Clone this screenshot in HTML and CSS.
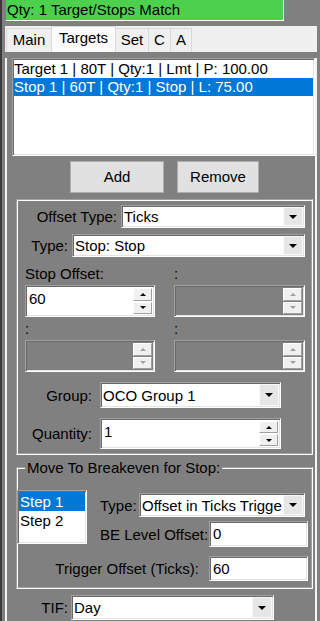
FILE: index.html
```html
<!DOCTYPE HTML>
<html>
<head>
    <title>Targets</title>
    <meta name="viewport" content="width=device-width, initial-scale=1">
    <link rel="stylesheet" href="styles.css">
</head>

<!--body scope-------------------------------------------------------->

<body>
<div class="frame">

    <div class="status">Qty: 1 Target/Stops Match</div>

    <div class="tabctl">
        <div class="tabstrip">
            <div class="tab t-main">Main</div>
            <div class="tab t-targets sel">Targets</div>
            <div class="tab t-set">Set</div>
            <div class="tab t-c">C</div>
            <div class="tab t-a">A</div>
        </div>

        <div class="page">

            <div class="list sunk orders">
                <div class="item">Target 1 | 80T | Qty:1 | Lmt | P: 100.00</div>
                <div class="item on">Stop 1 | 60T | Qty:1 | Stop | L: 75.00</div>
            </div>

            <div class="btnrow">
                <div class="btn add">Add</div>
                <div class="btn remove">Remove</div>
            </div>

            <!--order settings-->
            <div class="etched box1">
                <div class="row r-offset">
                    <div class="lbl">Offset Type:</div>
                    <div class="combo sunk"><span class="val">Ticks</span><span class="drop"></span></div>
                </div>
                <div class="row r-type">
                    <div class="lbl">Type:</div>
                    <div class="combo sunk"><span class="val">Stop: Stop</span><span class="drop"></span></div>
                </div>

                <div class="offsets">
                    <div class="cap">Stop Offset:</div>
                    <div class="cap">:</div>
                    <div class="spin sunk"><span class="val">60</span><span class="arrows"><span class="up"></span><span class="dn"></span></span></div>
                    <div class="spin sunk off"><span class="val"></span><span class="arrows"><span class="up"></span><span class="dn"></span></span></div>
                    <div class="cap">:</div>
                    <div class="cap">:</div>
                    <div class="spin sunk off"><span class="val"></span><span class="arrows"><span class="up"></span><span class="dn"></span></span></div>
                    <div class="spin sunk off"><span class="val"></span><span class="arrows"><span class="up"></span><span class="dn"></span></span></div>
                </div>

                <div class="row r-group">
                    <div class="lbl">Group:</div>
                    <div class="combo sunk"><span class="val">OCO Group 1</span><span class="drop"></span></div>
                </div>
                <div class="row r-qty">
                    <div class="lbl">Quantity:</div>
                    <div class="spin sunk"><span class="val">1</span><span class="arrows"><span class="up"></span><span class="dn"></span></span></div>
                </div>
            </div>

            <!--breakeven-->
            <div class="etched box2">
                <span class="title">Move To Breakeven for Stop:</span>
                <div class="be-top">
                    <div class="list sunk steps">
                        <div class="item on">Step 1</div>
                        <div class="item">Step 2</div>
                    </div>
                    <div class="be-right">
                        <div class="row r-betype">
                            <div class="lbl">Type:</div>
                            <div class="combo sunk"><span class="val">Offset in Ticks Trigge</span><span class="drop"></span></div>
                        </div>
                        <div class="row r-level">
                            <div class="lbl">BE Level Offset:</div>
                            <div class="field sunk">0</div>
                        </div>
                    </div>
                </div>
                <div class="row r-trigger">
                    <div class="lbl">Trigger Offset (Ticks):</div>
                    <div class="field sunk">60</div>
                </div>
            </div>

            <div class="row r-tif">
                <div class="lbl">TIF:</div>
                <div class="combo sunk"><span class="val">Day</span><span class="drop"></span></div>
            </div>

        </div>
    </div>
</div>
</body>

</html>
```

FILE: styles.css
```css
html {
    font-family: "Liberation Sans", Arial, sans-serif;
    font-size: 15px;
}

body {
    margin: 0;
    width: 320px;
    height: 621px;
    overflow: hidden;
    background-color: #808080;
    color: #000;
}

.frame {
    height: 621px;
    box-sizing: border-box;
    border-left: 2px solid #3a3a3a;
    padding-left: 3px;
}

/* top status bar */
.status {
    margin-left: 1px;
    width: 276px;
    height: 20px;
    line-height: 20px;
    padding-left: 1px;
    background-color: #4dd04d;
    border-right: 1px solid #fff;
    border-bottom: 1px solid #fff;
    white-space: nowrap;
}

/* tabs */
.tabctl {
    margin-top: 5px;
    width: 312px;
}

.tabstrip {
    display: flex;
    align-items: flex-end;
    height: 26px;
    padding-left: 1px;
    background-color: #f0f0f0;
}

.tab {
    height: 24px;
    box-sizing: border-box;
    margin-right: -1px;
    border: 1px solid #d9d9d9;
    border-bottom: none;
    line-height: 22px;
    text-align: center;
    background-color: #f0f0f0;
}

.tab.sel {
    height: 26px;
    background-color: #fbfbfb;
    position: relative;
}

.t-main { width: 46px; }
.t-targets { width: 65px; }
.t-set { width: 34px; }
.t-c { width: 23px; }
.t-a { width: 22px; }

.page {
    height: 567px;
    box-sizing: border-box;
    border: 2px solid #f4f4f4;
    border-top: none;
}

/* 3d borders */
.sunk {
    box-sizing: border-box;
    border: 1px solid;
    border-color: #a0a0a0 #fff #fff #a0a0a0;
    box-shadow: inset 1px 1px 0 #696969, inset -1px -1px 0 #e3e3e3;
}

.etched {
    box-sizing: border-box;
    border: 1px solid;
    border-color: #a0a0a0 #fff #fff #a0a0a0;
    box-shadow: inset 1px 1px 0 #fff, inset -1px -1px 0 #a0a0a0;
}

/* list boxes */
.list {
    background-color: #fff;
    padding: 1px;
    overflow: hidden;
}

.item {
    height: 18px;
    line-height: 18px;
    white-space: nowrap;
}

.item.on {
    background-color: #0078d7;
    color: #fff;
}

.orders {
    margin: 6px 0 0 5px;
    width: 303px;
    height: 98px;
}

.steps {
    width: 70px;
    height: 54px;
}

.steps .item {
    height: 19px;
    line-height: 19px;
    padding-left: 1px;
}

/* buttons */
.btnrow {
    display: flex;
    gap: 13px;
    margin: 5px 0 0 63px;
}

.btn {
    height: 32px;
    line-height: 30px;
    box-sizing: border-box;
    border: 1px solid #adadad;
    background-color: #e1e1e1;
    text-align: center;
}

.add { width: 94px; }
.remove { width: 82px; }

/* label + control rows */
.row {
    display: flex;
    align-items: center;
}

.lbl {
    box-sizing: border-box;
    text-align: right;
    white-space: nowrap;
}

.combo {
    display: flex;
    background-color: #fff;
}

.combo .val {
    flex: 1;
    padding-left: 2px;
    overflow: hidden;
    white-space: nowrap;
    display: flex;
    align-items: center;
}

.drop {
    width: 20px;
    margin: 1px 1px 1px 0;
    box-sizing: border-box;
    border: 1px solid #f8f8f8;
    background-color: #e6e6e6;
    display: flex;
    align-items: center;
    justify-content: center;
}

.drop:after {
    content: "";
    border-left: 4px solid transparent;
    border-right: 4px solid transparent;
    border-top: 4px solid #000;
}

.field {
    background-color: #fff;
    padding: 2px 0 0 3px;
    line-height: 20px;
}

/* numeric spinners */
.spin {
    display: flex;
    background-color: #fff;
}

.spin .val {
    flex: 1;
    padding: 4px 0 0 3px;
}

.spin.off {
    background-color: transparent;
}

.arrows {
    display: flex;
    flex-direction: column;
    gap: 1px;
    width: 19px;
    margin: 2px 2px 2px 0;
}

.up, .dn {
    flex: 1;
    box-sizing: border-box;
    border: 1px solid;
    border-color: #fff #a0a0a0 #a0a0a0 #fff;
    background-color: #f0f0f0;
    display: flex;
    align-items: center;
    justify-content: center;
}

.up:after, .dn:after {
    content: "";
    border-left: 3px solid transparent;
    border-right: 3px solid transparent;
}

.up:after { border-bottom: 3px solid #000; }
.dn:after { border-top: 3px solid #000; }
.off .up:after { border-bottom-color: #a0a0a0; }
.off .dn:after { border-top-color: #a0a0a0; }

/* first group */
.box1 {
    margin: 6px 0 0 9px;
    width: 297px;
    height: 256px;
}

.r-offset { margin-top: 5px; }
.r-offset .lbl { width: 104px; padding-right: 4px; }
.r-offset .combo { width: 184px; height: 23px; }

.r-type { margin-top: 6px; }
.r-type .lbl { width: 55px; padding-right: 4px; }
.r-type .combo { width: 233px; height: 23px; }

.offsets {
    display: grid;
    grid-template-columns: 130px 131px;
    grid-template-rows: 19px 32px 19px 32px;
    column-gap: 19px;
    row-gap: 2px;
    margin: 7px 0 0 8px;
}

.cap {
    line-height: 19px;
}

.r-group { margin-top: 10px; }
.r-group .lbl, .r-qty .lbl { width: 83px; padding-right: 8px; }
.r-group .combo { width: 181px; height: 26px; }

.r-qty { margin-top: 10px; }
.r-qty .spin { width: 181px; height: 31px; }

/* breakeven group */
.box2 {
    margin: 12px 0 0 9px;
    width: 297px;
    padding-bottom: 7px;
}

.title {
    display: inline-block;
    margin: -9px 0 0 8px;
    padding: 0 2px;
    line-height: 17px;
    background-color: #808080;
    vertical-align: top;
}

.be-top {
    display: flex;
    align-items: flex-start;
    margin-top: 5px;
}

.be-right {
    margin-left: 13px;
}

.r-betype { margin-top: 3px; }
.r-betype .lbl { width: 39px; padding-right: 4px; }
.r-betype .combo { width: 166px; height: 24px; }

.r-level { margin-top: 4px; }
.r-level .lbl { width: 109px; padding-right: 3px; }
.r-level .field { width: 99px; height: 26px; }

.r-trigger { margin-top: 9px; }
.r-trigger .lbl { width: 192px; padding-right: 10px; }
.r-trigger .field { width: 99px; height: 25px; }

.r-tif { margin-top: 6px; }
.r-tif .lbl { width: 64px; padding-right: 3px; }
.r-tif .combo { width: 203px; height: 25px; }
```
